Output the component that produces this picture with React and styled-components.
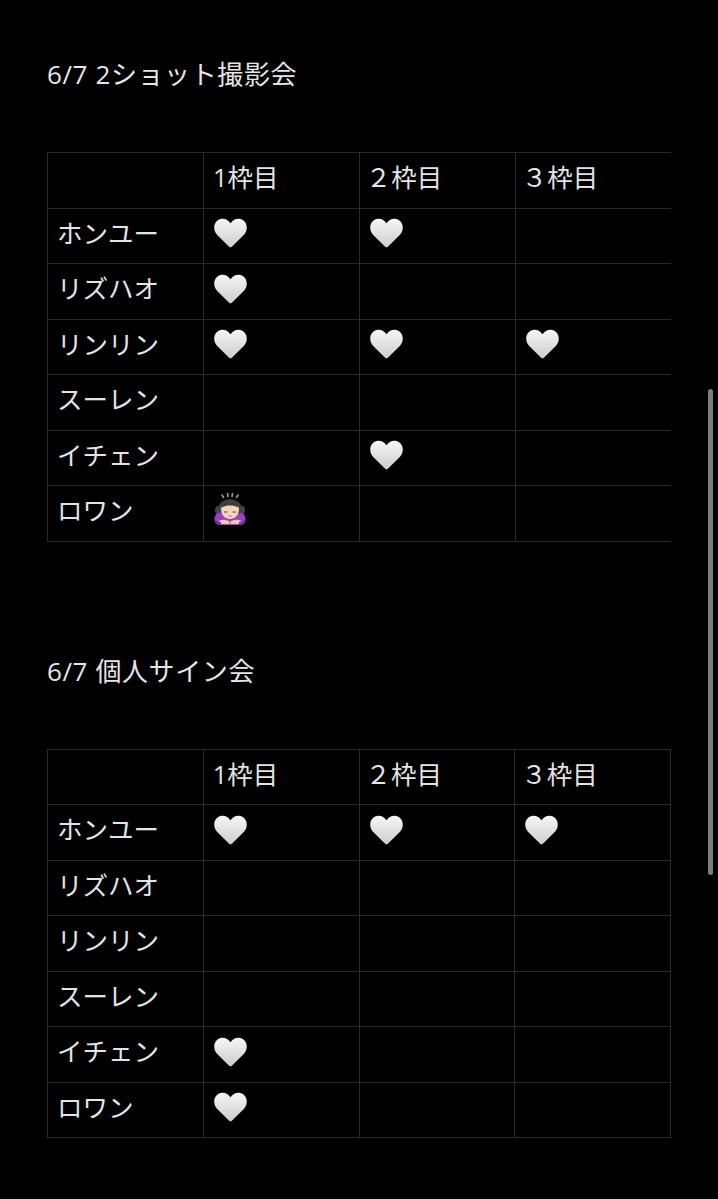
import React from "react"
import styled, { createGlobalStyle } from "styled-components"

const GlobalStyle = createGlobalStyle`
  html, body {
    margin: 0;
    padding: 0;
    background: #000;
  }
  body {
    font-family: "Open Sans", "Noto Sans CJK JP", sans-serif;
    color: #e4e4e4;
  }
`

const Page = styled.div`
  padding: 56px 47px 60px;
  min-height: 1199px;
  box-sizing: border-box;
`

const Section = styled.section`
  & + & {
    margin-top: 111px;
  }
`

const Title = styled.h2`
  margin: 0;
  font-size: 26px;
  line-height: 36px;
  font-weight: 400;
  letter-spacing: 0.6px;
  color: #e6e6e6;
`

const Table = styled.table`
  margin-top: 60px;
  width: 624px;
  table-layout: fixed;
  border-collapse: collapse;
`

const Row = styled.tr`
  height: 55.5px;
`

const Cell = styled.td`
  border: 1px solid #2b2b2b;
  border-right: ${p => (p.$open ? "none" : "1px solid #2b2b2b")};
  padding: 0 9px 6px;
  font-size: 25.5px;
  line-height: 30px;
  vertical-align: middle;
  color: #e4e4e4;
  white-space: nowrap;
  overflow: hidden;
`

const Slot = styled.span`
  margin-left: ${p => (p.$wide ? "-3px" : "0")};
`

const Mark = styled.span`
  display: inline-flex;
  vertical-align: middle;
  margin-top: -2px;
`

const ScrollThumb = styled.div`
  position: absolute;
  left: 708px;
  top: 389px;
  width: 5px;
  height: 486px;
  border-radius: 3px;
  background: #7c7c7c;
`

const Heart = () => (
  <svg width="35" height="32" viewBox="0 0 35 32">
    <defs>
      <linearGradient id="hg" x1="0" y1="0" x2="0" y2="1">
        <stop offset="0" stopColor="#f6f6f6" />
        <stop offset="1" stopColor="#cdcdcd" />
      </linearGradient>
    </defs>
    <path
      d="M17.5 30.5 C16.8 30.5 16.3 30 15.6 29.3 L4.2 18 C-0.8 12.8 0.6 3.6 7.6 1.9 C11.6 1 15.4 2.8 17.5 6.2 C19.6 2.8 23.4 1 27.4 1.9 C34.4 3.6 35.8 12.8 30.8 18 L19.4 29.3 C18.7 30 18.2 30.5 17.5 30.5 Z"
      fill="url(#hg)"
    />
  </svg>
)

const Bowing = () => (
  <svg width="34" height="36" viewBox="0 0 34 36">
    <g stroke="#9a9a9a" strokeWidth="1.6" strokeLinecap="round">
      <line x1="9" y1="3" x2="10.5" y2="5.5" />
      <line x1="14.5" y1="1.5" x2="15" y2="4.5" />
      <line x1="19.5" y1="1.5" x2="19" y2="4.5" />
      <line x1="25" y1="3" x2="23.5" y2="5.5" />
    </g>
    <ellipse cx="17" cy="16" rx="11.5" ry="9" fill="#3d3d3d" />
    <ellipse cx="5.5" cy="18" rx="3.5" ry="4" fill="#444" />
    <ellipse cx="28.5" cy="18" rx="3.5" ry="4" fill="#444" />
    <path d="M17 8.5 L17 14" stroke="#555" strokeWidth="1" />
    <path d="M1.5 27 C2 21 6 19.5 10 22 L24 22 C28 19.5 32 21 32.5 27 C32.5 31 30 33 26 33 L8 33 C4 33 1.5 31 1.5 27 Z" fill="#9b3fc4" />
    <path d="M8 16.5 C8 13.5 12 12 17 12 C22 12 26 13.5 26 16.5 C26 23 22 27 17 27 C12 27 8 23 8 16.5 Z" fill="#f6d3bd" />
    <path d="M8 16 C9.5 12 13 11 17 11 C21 11 24.5 12 26 16 C23 14 20 13.5 17 13.5 C14 13.5 11 14 8 16 Z" fill="#3d3d3d" />
    <path d="M11.5 20 L14 20" stroke="#5a3a2a" strokeWidth="1" strokeLinecap="round" />
    <path d="M20 20 L22.5 20" stroke="#5a3a2a" strokeWidth="1" strokeLinecap="round" />
    <path d="M15.5 24 L18.5 24" stroke="#b57a62" strokeWidth="0.9" strokeLinecap="round" />
    <path d="M6 29 C9 27 13 27.5 16.5 29.5 L16.5 32 L7 32 C5.5 32 5 30 6 29 Z" fill="#f0c9b0" />
    <path d="M28 29 C25 27 21 27.5 17.5 29.5 L17.5 32 L27 32 C28.5 32 29 30 28 29 Z" fill="#f0c9b0" />
    <path d="M1.5 27 C1.5 31 4 33 8 33 L8 30 C5 30 3 29 1.5 27 Z" fill="#7b2ea3" />
    <path d="M32.5 27 C32.5 31 30 33 26 33 L26 30 C29 30 31 29 32.5 27 Z" fill="#7b2ea3" />
  </svg>
)

const slots = ["1枠目", "２枠目", "３枠目"]

const schedules = [
  {
    title: "6/7 2ショット撮影会",
    open: true,
    rows: [
      ["ホンユー", "h", "h", ""],
      ["リズハオ", "h", "", ""],
      ["リンリン", "h", "h", "h"],
      ["スーレン", "", "", ""],
      ["イチェン", "", "h", ""],
      ["ロワン", "b", "", ""],
    ],
  },
  {
    title: "6/7 個人サイン会",
    open: false,
    rows: [
      ["ホンユー", "h", "h", "h"],
      ["リズハオ", "", "", ""],
      ["リンリン", "", "", ""],
      ["スーレン", "", "", ""],
      ["イチェン", "h", "", ""],
      ["ロワン", "h", "", ""],
    ],
  },
]

const renderMark = v => {
  if (v === "h") return <Mark><Heart /></Mark>
  if (v === "b") return <Mark><Bowing /></Mark>
  return null
}

export default function App() {
  return (
    <>
      <GlobalStyle />
      <Page>
        {schedules.map(s => (
          <Section key={s.title}>
            <Title>{s.title}</Title>
            <Table>
              <tbody>
                <Row>
                  <Cell />
                  {slots.map((slot, i) => (
                    <Cell key={slot} $open={s.open && i === 2}>
                      <Slot $wide={i > 0}>{slot}</Slot>
                    </Cell>
                  ))}
                </Row>
                {s.rows.map(([name, ...marks]) => (
                  <Row key={name}>
                    <Cell>{name}</Cell>
                    {marks.map((m, i) => (
                      <Cell key={i} $open={s.open && i === 2}>
                        {renderMark(m)}
                      </Cell>
                    ))}
                  </Row>
                ))}
              </tbody>
            </Table>
          </Section>
        ))}
      </Page>
      <ScrollThumb />
    </>
  )
}
